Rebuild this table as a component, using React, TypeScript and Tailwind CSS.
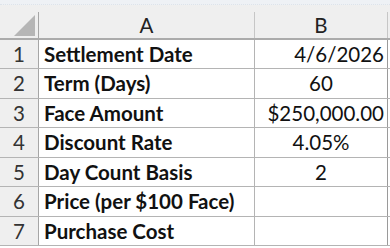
const rows = [
  { label: 'Settlement Date', value: '4/6/2026', align: 'right' },
  { label: 'Term (Days)', value: '60', align: 'center' },
  { label: 'Face Amount', value: '$250,000.00', align: 'right' },
  { label: 'Discount Rate', value: '4.05%', align: 'center' },
  { label: 'Day Count Basis', value: '2', align: 'center' },
  { label: 'Price (per $100 Face)', value: '', align: 'center' },
  { label: 'Purchase Cost', value: '', align: 'center' },
]

const heights = ['h-[29px]', 'h-[30px]', 'h-[29px]', 'h-[30px]', 'h-[29px]', 'h-[30px]', 'h-[29px]']

const App = () => {
  return (
    <div className="w-[390px] h-[248px] overflow-hidden bg-white font-['Lato','Liberation_Sans',sans-serif] text-[20.5px] text-[#111]">
      <div className="h-[5px] bg-[#eef1f5] border-b border-dotted border-[#dde3ea]" />
      <div className="flex h-[35px] bg-[#efefef] border-b-2 border-[#ababab] pt-[7px]">
        <div className="w-[39px] h-full border-r border-[#a6a6a6] flex items-end justify-end pr-[3px] pb-[2px]">
          <svg width="21" height="21" viewBox="0 0 20 20">
            <polygon points="20,0 20,20 0,20" fill="#b6b6b6" />
          </svg>
        </div>
        <div className="w-[216px] h-full border-r border-[#c6c6c6] flex items-center justify-center text-[#222]">
          A
        </div>
        <div className="w-[133px] h-full border-r border-[#c6c6c6] flex items-center justify-center text-[#222]">
          B
        </div>
      </div>
      {rows.map((row, i) => (
        <div key={i} className={`flex ${heights[i]} border-b border-[#b4b4b4]`}>
          <div className="w-[39px] h-full bg-[#efefef] border-r border-[#a6a6a6] flex items-center justify-center text-[#333]">
            {i + 1}
          </div>
          <div className="w-[216px] h-full border-r border-[#b4b4b4] flex items-center pl-[5px] font-bold whitespace-nowrap">
            {row.label}
          </div>
          <div
            className={`w-[133px] h-full border-r border-[#9a9a9a] flex items-center px-[3px] whitespace-nowrap ${
              row.align === 'right' ? 'justify-end' : 'justify-center'
            }`}
          >
            {row.value}
          </div>
        </div>
      ))}
    </div>
  )
}

export default App
